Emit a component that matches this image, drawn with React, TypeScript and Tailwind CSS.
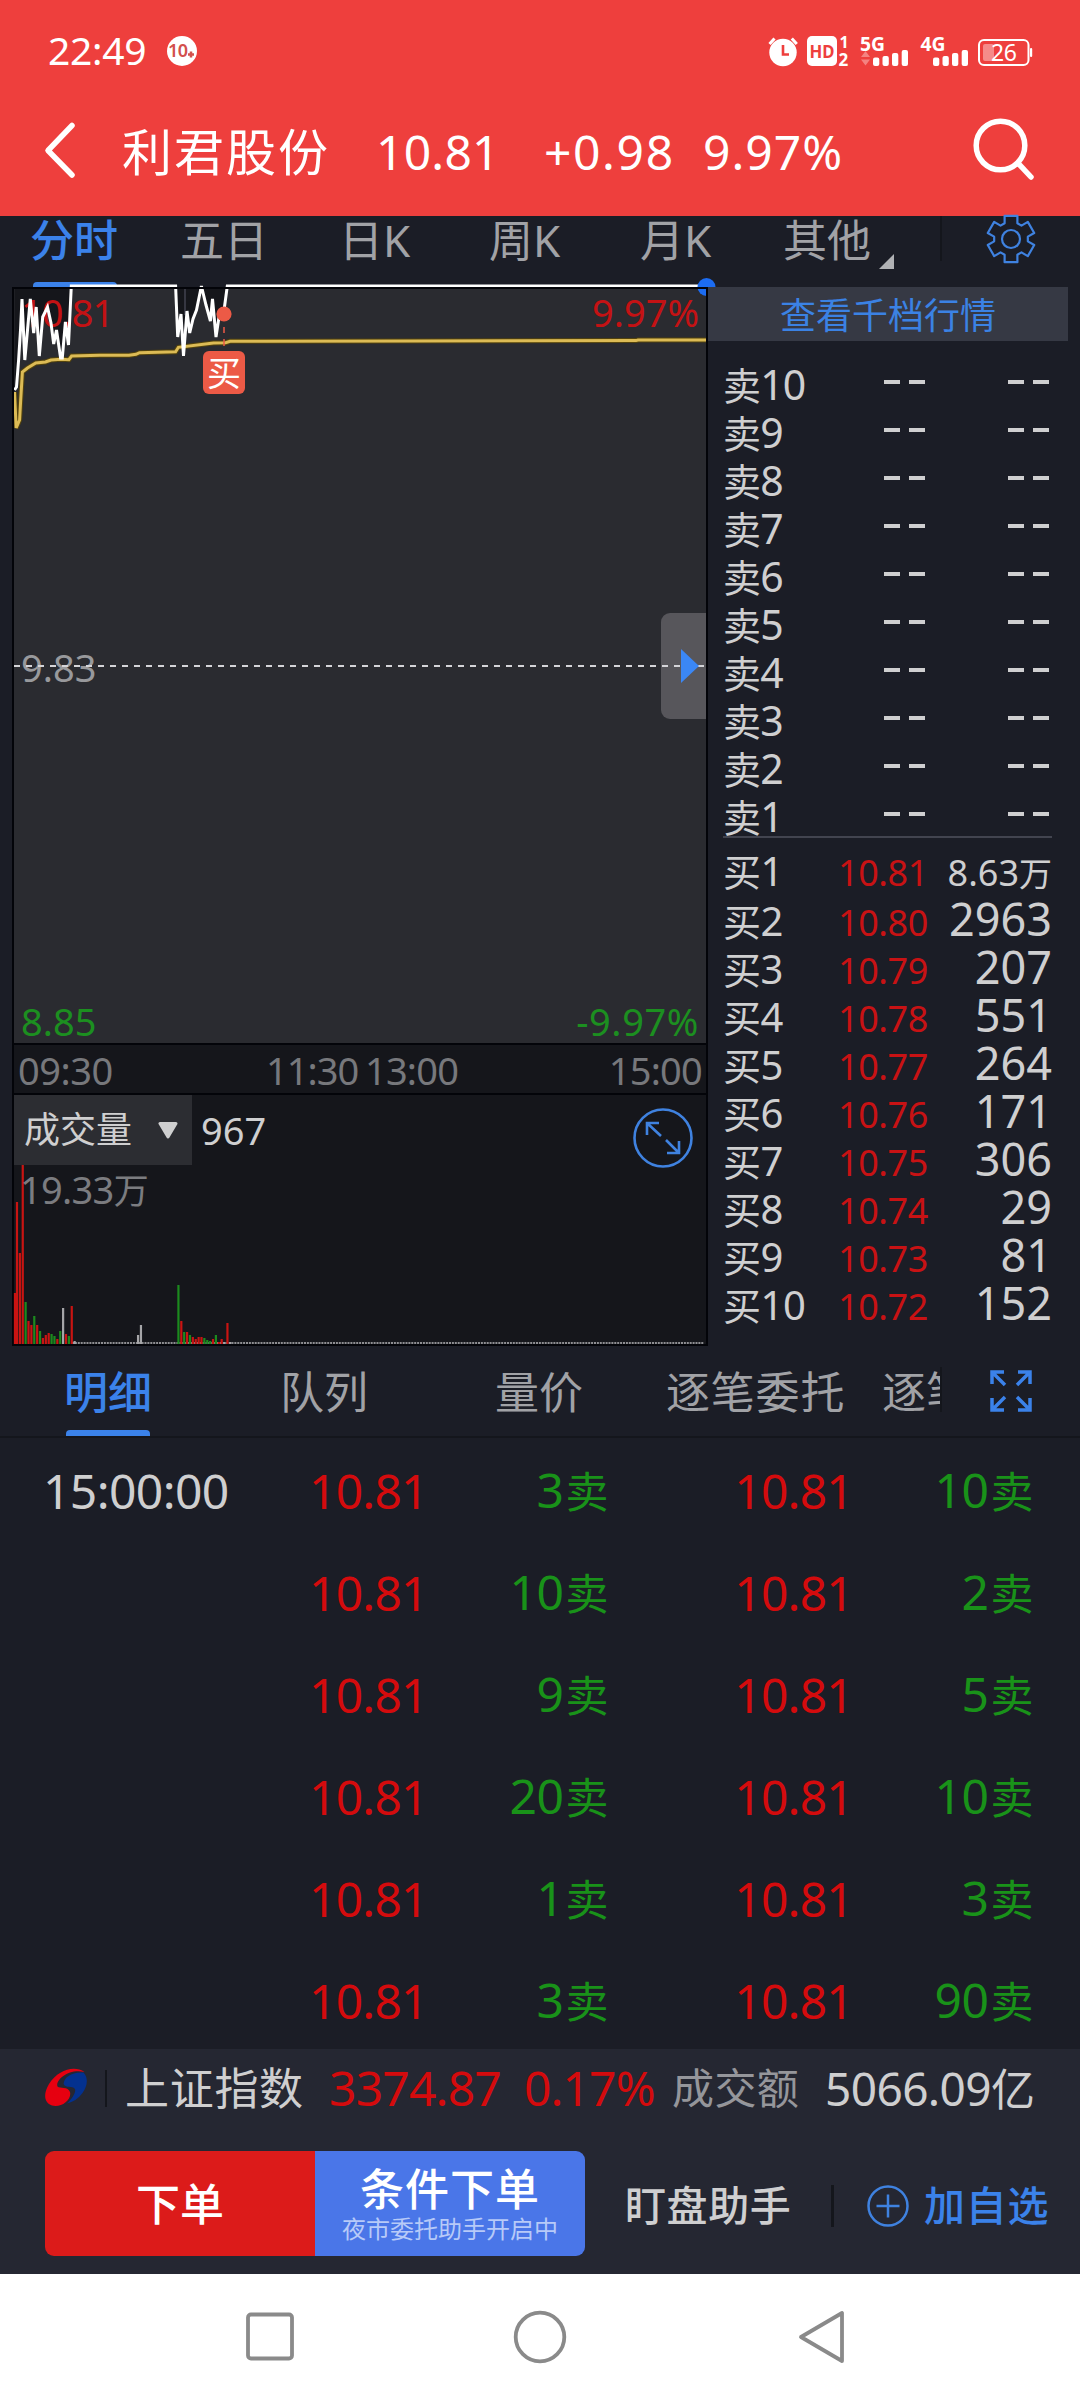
/**
 * Stock detail screen - intraday chart, order book and trade ticks
 */

import React from 'react';

type VolumeBar = [slot: number, top: number, color: string];

const RED = '#c91412';
const GREEN = '#1c8a1e';
const GRAY = '#a5a5a8';

const PRICE_POINTS =
  '14.5,390 16.5,387 18.6,360 20.5,330 22,299 24.8,360 30.3,299 33.7,333 36.2,307 39.3,356 42.7,317 47.5,307 51,323 53.7,344 56.5,330 60.6,358 62.3,358 65.4,322 68.5,345 71.3,286 175.6,286 177.7,337 181,314 183.5,356 187,311 189.7,333 193,319 196.5,310 201.4,286 206,305 210.4,321 212.5,299 216,337 219,317 223.8,312 227.3,286 708,286';

const AVERAGE_POINTS =
  '14.5,392 16.2,428 19.6,420 20.7,400 22.4,372 27.5,368 35.8,363 45.5,362 51,360 61.3,359.3 68.9,359.7 71.6,356 99.9,355.3 129,355.3 136,354.3 139.5,352.7 175.6,351.7 178.4,347.3 213.5,343 225.6,342.7 230,341.3 263,341.3 413,341 636,340.6 638,340 707,340';

const VOLUME_BARS: VolumeBar[] = [
  [0.3, 1293, RED], [1, 1202, RED], [2, 1253, RED], [3, 1165, RED], [4, 1302, GREEN],
  [5, 1321, RED], [6, 1325, RED], [7, 1316, GREEN], [8, 1325, RED], [9, 1331, GREEN],
  [10, 1338, RED], [11, 1335, RED], [12, 1333, RED], [13, 1334, GREEN], [14, 1336, GREEN],
  [15, 1339, RED], [16, 1331, GREEN], [17, 1308, GRAY], [18, 1334, RED], [19, 1336, GREEN],
  [20, 1306, RED], [21, 1341, GRAY], [43, 1335, GRAY], [44, 1325, GRAY], [57, 1285, GREEN],
  [58, 1321, RED], [59, 1332, GREEN], [60, 1332, RED], [61, 1335, GREEN], [62, 1337, RED],
  [63, 1339, RED], [64, 1337, RED], [65, 1337, RED], [66, 1338, GREEN], [67, 1340, GREEN],
  [68, 1341, GREEN], [69, 1339, RED], [70, 1335, GREEN], [71, 1342, RED], [72, 1339, RED],
  [73, 1342, GRAY], [74, 1323, RED], [75, 1342, GRAY],
];

const BIDS = [
  ['10.81', '8.63'],
  ['10.80', '2963'],
  ['10.79', '207'],
  ['10.78', '551'],
  ['10.77', '264'],
  ['10.76', '171'],
  ['10.75', '306'],
  ['10.74', '29'],
  ['10.73', '81'],
  ['10.72', '152'],
];

const TRADES = [
  ['15:00:00', '3', '10'],
  ['', '10', '2'],
  ['', '9', '5'],
  ['', '20', '10'],
  ['', '1', '3'],
  ['', '3', '90'],
];

const StatusIcons: React.FC = () => (
  <svg
    className="w-[270px] h-[36px]"
    viewBox="766 33 270 36"
    fill="#fff"
    fontFamily="Noto Sans, sans-serif"
  >
    <circle cx="783" cy="52.5" r="13.7" />
    <path d="M769.5 44l5-5.5M796.8 44l-5-5.5" stroke="#fff" strokeWidth="3" />
    <path d="M783 45v9.5h6" stroke="#ee3f3d" strokeWidth="2.6" fill="none" />
    <rect x="807" y="36" width="30" height="30" rx="5" />
    <text x="809.5" y="58" fontSize="18" fontWeight="700" fill="#ee3f3d" textLength="25" lengthAdjust="spacingAndGlyphs">HD</text>
    <text x="839.5" y="48" fontSize="16" fontWeight="700">1</text>
    <text x="838.5" y="66" fontSize="17" fontWeight="700">2</text>
    <text x="860" y="51" fontSize="20" fontWeight="700" textLength="25" lengthAdjust="spacingAndGlyphs">5G</text>
    <path d="M861 57l4.5-6 4.5 6zM861 59.5l4.5 6 4.5-6z" opacity=".35" />
    <text x="920.5" y="51" fontSize="20" fontWeight="700" textLength="25" lengthAdjust="spacingAndGlyphs">4G</text>
    {[873, 933].map((x) => (
      <g key={x}>
        <rect x={x} y="57.5" width="6.3" height="8.5" rx="2" />
        <rect x={x + 9.5} y="56" width="6.3" height="10" rx="2" />
        <rect x={x + 19} y="53" width="6.3" height="13" rx="2" />
        <rect x={x + 28.7} y="50" width="6.3" height="16" rx="2" />
      </g>
    ))}
    <rect x="979" y="40" width="49.5" height="25" rx="5" fill="none" stroke="#fff" strokeWidth="2" />
    <rect x="983" y="44" width="11" height="17" rx="2" opacity=".4" />
    <rect x="1030" y="48" width="2.2" height="9" rx="1" />
    <text x="991" y="61" fontSize="23" textLength="26">26</text>
  </svg>
);

const GearIcon: React.FC = () => {
  const points: string[] = [];
  for (let tooth = 0; tooth < 6; tooth++) {
    [[-22, 17], [-15.5, 24], [15.5, 24], [22, 17]].forEach(([offset, radius]) => {
      const a = ((tooth * 60 + offset - 90) * Math.PI) / 180;
      points.push(`${25 + radius * Math.cos(a)},${25 + radius * Math.sin(a)}`);
    });
  }
  return (
    <svg className="w-[50px] h-[50px]" viewBox="0 0 50 50" fill="none" stroke="#3f82e0" strokeWidth="2.2" strokeLinejoin="round">
      <polygon points={points.join(' ')} />
      <circle cx="25" cy="25" r="9" />
    </svg>
  );
};

const Header: React.FC = () => (
  <header className="h-[216px] bg-[#ee3f3d] text-white">
    <div className="h-[102px] flex items-center pl-[48px] text-[39px]">
      <span className="w-[119px] leading-[48px] -tracking-[0.3px] -mt-[2px]">22:49</span>
      <svg className="w-[30px] h-[30px]" viewBox="0 0 30 30">
        <circle cx="15" cy="15" r="15" fill="#fff" />
        <text x="1" y="21" fontFamily="Noto Sans, sans-serif" fontSize="18" fontWeight="600" fill="#d3504c" textLength="20">10</text>
        <path d="M24 15.5v6M21 18.5h6" stroke="#d3504c" strokeWidth="2.5" />
      </svg>
      <div className="ml-auto mr-[44px]">
        <StatusIcons />
      </div>
    </div>
    <div className="h-[100px] flex items-center text-[48px] leading-[60px] whitespace-nowrap">
      <svg className="w-[36px] h-[60px] ml-[42px] shrink-0 -mt-[4px]" viewBox="0 0 36 60" fill="none" stroke="#fff" strokeWidth="5.5" strokeLinecap="round" strokeLinejoin="round">
        <path d="M30 5.5L6 30.5 30 55" />
      </svg>
      <span className="w-[254px] ml-[44px] text-[50px] tracking-[2px]">利君股份</span>
      <span className="w-[168px] tracking-[0.2px]">10.81</span>
      <span className="w-[159px] tracking-[1.6px]">+0.98</span>
      <span className="w-[268px] tracking-[1px]">9.97%</span>
      <svg className="w-[64px] h-[66px] shrink-0 -mt-[4px]" viewBox="0 0 64 66" fill="none" stroke="#fff" strokeWidth="5.5" strokeLinecap="round">
        <circle cx="29.5" cy="28.500" r="24.3" />
        <path d="M47 46l13 14" />
      </svg>
    </div>
  </header>
);

const PeriodTabs: React.FC = () => (
  <nav className="h-[71px] flex items-start text-[44px] leading-[48px] text-[#a1a2a6] whitespace-nowrap">
    <div className="w-[149px] pl-[30px] text-[#3b82ea] font-medium">
      分时
      <div className="w-[84px] h-[5px] ml-[3px] mt-[18px] rounded-t-sm bg-[#3b82ea]" />
    </div>
    <span className="w-[158px] pl-[31px]">五日</span>
    <span className="w-[150px] pl-[32px]">日K</span>
    <span className="w-[150px] pl-[32px]">周K</span>
    <span className="w-[150px] pl-[33px]">月K</span>
    <span className="w-[122px] pl-[26px]">其他</span>
    <svg className="w-[15px] h-[15px] mt-[38px]" viewBox="0 0 15 15">
      <path d="M15 0v15H0z" fill="#b0b1b4" />
    </svg>
    <div className="w-[2px] h-[45px] ml-[46px] bg-[#14161c]" />
    <div className="ml-[44px] -mt-[2px]">
      <GearIcon />
    </div>
  </nav>
);

const IntradayChart: React.FC = () => (
  <div className="relative h-[758px] bg-[#2a2b30] text-[38px] leading-[48px]">
    <svg className="absolute inset-0 w-full h-full" viewBox="12 287 696 758">
      <polygon points={`14.5,287 ${PRICE_POINTS}`} fill="#15161b" />
      <path d="M185 289v26" stroke="#363742" strokeWidth="2" />
    </svg>
    <div className="relative h-full flex flex-col justify-between pt-[1px] pl-[9px] pr-[9px]">
      <div className="flex justify-between text-[#c41214]">
        <span className="-tracking-[1px]">10.81</span>
        <span>9.97%</span>
      </div>
      <span className="text-[#98999c]">9.83</span>
      <div className="flex justify-between text-[#1c8f20]">
        <span>8.85</span>
        <span className="tracking-[0.6px]">-9.97%</span>
      </div>
    </div>
    <div className="absolute right-[2px] top-[326px] w-[45px] h-[106px] rounded-l-[9px] bg-[#57565b]" />
    <svg className="absolute inset-0 w-full h-full overflow-visible" viewBox="12 287 696 758" fill="none">
      <path d="M14 666H704" stroke="#d4d4d8" strokeWidth="2" strokeDasharray="6 6" />
      <path d="M681 649l18 17-18 17z" fill="#3b87f5" />
      <polyline points={AVERAGE_POINTS} stroke="#53430d" strokeWidth="5" />
      <polyline points={AVERAGE_POINTS} stroke="#dcbb55" strokeWidth="3" />
      <polyline points={PRICE_POINTS} stroke="#fff" strokeWidth="3" />
      <path d="M224 327v6M224 339v7" stroke="#ec5a46" strokeWidth="1.5" />
      <circle cx="224" cy="314" r="7.6" fill="#ec5a46" />
      <circle cx="706.5" cy="287" r="9" fill="#1c6cf2" />
      <rect x="13" y="288" width="694" height="756" stroke="#030409" strokeWidth="2" />
    </svg>
    <span className="absolute left-[191px] top-[64px] w-[42px] h-[43px] rounded-[6px] bg-[#ec5a46] text-center text-[34px] leading-[45px] text-white">
      买
    </span>
  </div>
);

const VolumeChart: React.FC = () => (
  <div className="relative h-[251px] border-2 border-t-0 border-[#030409] bg-[#15161b] leading-[48px]">
    <svg className="absolute -left-[2px] top-0 w-[696px] h-[251px]" viewBox="12 1095 696 251">
      <path d="M72 1343H704" stroke="#b6b6ba" strokeWidth="1.5" strokeDasharray="2 0.9" />
      {VOLUME_BARS.map(([slot, top, color]) => (
        <rect key={slot} x={13 + slot * 2.883} y={top} width="2.2" height={1344 - top} fill={color} />
      ))}
    </svg>
    <div className="relative h-[70px] flex items-center text-[#cfcfd0]">
      <div className="w-[178px] h-full pl-[10px] flex items-center bg-[#2c2d32] text-[36px]">
        <span>成交量</span>
        <svg className="w-[20px] h-[17px] ml-[26px]" viewBox="0 0 20 17">
          <path d="M2 1.5h16L10 15z" fill="#cfcfd0" stroke="#cfcfd0" strokeWidth="3" strokeLinejoin="round" />
        </svg>
      </div>
      <span className="ml-[9px] text-[38px]">967</span>
      <svg className="w-[60px] h-[60px] ml-auto mr-[13px] mt-[16px]" viewBox="0 0 60 60" fill="none" stroke="#3f82e0" strokeWidth="2.6">
        <circle cx="30" cy="30" r="28.5" />
        <path d="M14 27V15h12M14.5 15.5L28 28M33 32l13 13M46 33v12H34" />
      </svg>
    </div>
    <span className="relative block pl-[6px] text-[#7b7c80] text-[38px] -tracking-[0.7px]">
      19.33<span className="text-[35px]">万</span>
    </span>
  </div>
);

const ChartColumn: React.FC = () => (
  <section className="w-[696px] ml-[12px] shrink-0">
    <IntradayChart />
    <div className="h-[50px] flex pl-[4px] pr-[4px] border-x-2 border-b-2 border-[#030409] bg-[#15161b] text-[38px] leading-[50px] text-[#77787c] -tracking-[0.5px]">
      <span className="w-[248px]">09:30</span>
      <span className="w-[99px] -tracking-[1px]">11:30</span>
      <span className="-tracking-[0.8px]">13:00</span>
      <span className="ml-auto -tracking-[0.8px]">15:00</span>
    </div>
    <VolumeChart />
  </section>
);

const OrderBook: React.FC = () => (
  <aside className="relative w-[360px]">
    <div className="h-[54px] bg-[#363944] text-center text-[36px] leading-[58px] text-[#3b82e4]">查看千档行情</div>
    <div className="pl-[15px] pr-[16px] text-[#cfcfd0] whitespace-nowrap">
      <div className="h-[497px] pt-[19px] border-b-2 border-[#42444f]">
        {[10, 9, 8, 7, 6, 5, 4, 3, 2, 1].map((level) => (
          <div key={level} className="h-[48px] flex items-center">
            <span className="w-[161px] text-[41px] leading-[48px] -tracking-[0.8px]">
              <span className="text-[38px]">卖</span>
              {level}
            </span>
            <div className="flex gap-[9px] -mt-[5px]">
              <i className="w-[16px] h-[4px] bg-[#cfcfd0]" />
              <i className="w-[16px] h-[4px] bg-[#cfcfd0]" />
            </div>
            <div className="flex gap-[9px] -mt-[5px] ml-auto mr-[3px]">
              <i className="w-[16px] h-[4px] bg-[#cfcfd0]" />
              <i className="w-[16px] h-[4px] bg-[#cfcfd0]" />
            </div>
          </div>
        ))}
      </div>
      <div className="pt-[9px]">
        {BIDS.map(([price, amount], i) => (
          <div key={price} className="h-[48px] flex items-baseline leading-[48px]">
            <span className="w-[106px] text-[40px] -tracking-[0.5px]">
              <span className="text-[38px]">买</span>
              {i + 1}
            </span>
            <span className="w-[99px] text-right text-[36px] -tracking-[0.4px] text-[#c81214]">{price}</span>
            {i === 0 ? (
              <span className="flex-1 text-right text-[36px]">
                {amount}
                <span className="text-[33px]">万</span>
              </span>
            ) : (
              <span className="flex-1 text-right text-[45px]">{amount}</span>
            )}
          </div>
        ))}
      </div>
    </div>
  </aside>
);

const DetailTabs: React.FC = () => (
  <nav className="h-[92px] pt-[21px] flex items-start border-b-2 border-[#14161c] text-[44px] leading-[50px] text-[#a1a2a6] whitespace-nowrap">
    <div className="w-[280px] pl-[64px] text-[#3b82ea] font-medium">
      明细
      <div className="w-[84px] h-[6px] ml-[2px] mt-[13px] rounded-t-sm bg-[#3b82ea]" />
    </div>
    <span className="w-[215px]">队列</span>
    <span className="w-[171px]">量价</span>
    <span className="w-[216px] tracking-[0.8px]">逐笔委托</span>
    <span className="w-[58px] overflow-hidden">逐笔</span>
    <div className="w-[2px] h-[45px] bg-[#14161c]" />
    <svg className="w-[44px] h-[44px] ml-[47px] mt-[2px]" viewBox="0 0 44 44" fill="none" stroke="#3b82ea" strokeWidth="3.5">
      <path d="M3 15V3h12M3 3l13 13M29 3h12v12M41 3L28 16M3 29v12h12M3 41l13-13M41 29v12H29M41 41L28 28" />
    </svg>
  </nav>
);

const TradeAmount: React.FC<{ amount: string }> = ({ amount }) => (
  <span className="text-right text-[#199219] -tracking-[0.5px]">
    {amount}
    <span className="ml-[2px] text-[43px]">卖</span>
  </span>
);

const TradeList: React.FC = () => (
  <section className="h-[611px] pt-[2px] overflow-hidden">
    {TRADES.map(([time, first, second], i) => (
      <div
        key={i}
        className="h-[102px] pl-[43px] grid grid-cols-[266px_119px_180px_245px_180px] items-center text-[48px] leading-[60px]"
      >
        <span className="text-[#cfcfd0] -tracking-[0.6px]">{time}</span>
        <span className="text-[#d40b0d] -tracking-[0.8px]">10.81</span>
        <TradeAmount amount={first} />
        <span className="text-right text-[#d40b0d] -tracking-[0.8px]">10.81</span>
        <TradeAmount amount={second} />
      </div>
    ))}
  </section>
);

const BottomBar: React.FC = () => (
  <footer className="h-[225px] bg-[#252732] whitespace-nowrap">
    <div className="h-[78px] flex items-center pl-[45px] text-[48px] leading-[60px]">
      <svg className="w-[42px] h-[40px] shrink-0 -mt-[2px]" viewBox="0 0 42 40">
        <path d="M39.5 5C29-2 13 3 4 17 -2 27-1 36 7 38.5 16 41 27 33 25 25 23 19 15 22 12.5 19.5 10 13 24 1 39.5 5z" fill="#e60010" />
        <path d="M18.6 17C19 10 27 4.5 38.5 5.5 44 11 42 20 37.5 26 33 32 28 35 22 36.5 28 31 31 25 30 22 27 18 21 22 18.6 17z" fill="#04318f" />
      </svg>
      <div className="w-[2px] h-[37px] ml-[18px] mr-[18px] bg-[#14161c]" />
      <span className="w-[204px] text-[44px] tracking-[0.7px] text-[#cfcfd0]">上证指数</span>
      <span className="w-[195px] text-[#d40b0d] -tracking-[0.8px]">3374.87</span>
      <span className="w-[148px] text-[#d40b0d] -tracking-[0.9px]">0.17%</span>
      <span className="w-[153px] text-[42px] tracking-[0.4px] text-[#95969b]">成交额</span>
      <span className="text-[46px] -tracking-[0.6px] text-[#cfcfd0]">
        5066.09<span className="text-[44px]">亿</span>
      </span>
    </div>
    <div className="flex pt-[24px] pl-[45px]">
      <button className="w-[270px] h-[105px] rounded-l-[9px] bg-[#dc1b1a] text-[44px] font-medium text-white leading-[60px]">
        下单
      </button>
      <button className="w-[270px] h-[105px] rounded-r-[9px] bg-[#4a76e8] text-white font-medium">
        <span className="block pt-[2px] text-[44px] leading-[48px] tracking-[1px]">条件下单</span>
        <span className="block text-[24px] leading-[32px] font-normal text-[#b7caf8]">夜市委托助手开启中</span>
      </button>
      <div className="flex items-center h-[109px] text-[41px] font-medium">
        <span className="w-[206px] ml-[40px] tracking-[0.6px] text-[#cfcfd0]">盯盘助手</span>
        <div className="w-[3px] h-[42px] bg-[#14161c]" />
        <svg className="w-[42px] h-[42px] ml-[33px] mr-[15px]" viewBox="0 0 42 42" fill="none" stroke="#3f82e0" strokeWidth="2.5">
          <circle cx="21" cy="21" r="19.5" />
          <path d="M21 9.5v23M9.5 21h23" />
        </svg>
        <span className="tracking-[0.8px] text-[#3b82ea]">加自选</span>
      </div>
    </div>
  </footer>
);

const SystemNav: React.FC = () => (
  <div className="h-[126px] bg-white flex items-center">
    <svg className="w-full h-[60px]" viewBox="0 2307 1080 60" fill="none" stroke="#8a8a8a" strokeWidth="3.8" strokeLinejoin="round">
      <rect x="248" y="2314.5" width="44" height="44" rx="3" />
      <circle cx="540" cy="2337" r="24.3" />
      <path d="M801 2337L842 2313v48z" />
    </svg>
  </div>
);

const App: React.FC = () => (
  <div className="w-[1080px] h-[2400px] overflow-hidden bg-[#1b1d26] font-['Noto_Sans','Noto_Sans_CJK_SC',sans-serif]">
    <Header />
    <PeriodTabs />
    <main className="flex">
      <ChartColumn />
      <OrderBook />
    </main>
    <DetailTabs />
    <TradeList />
    <BottomBar />
    <SystemNav />
  </div>
);

export default App;
